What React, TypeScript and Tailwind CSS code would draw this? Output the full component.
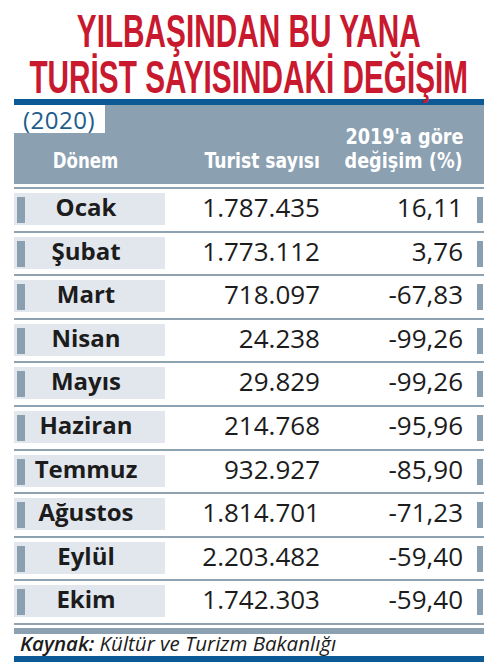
const rows = [
  { month: "Ocak", count: "1.787.435", change: "16,11" },
  { month: "Şubat", count: "1.773.112", change: "3,76" },
  { month: "Mart", count: "718.097", change: "-67,83" },
  { month: "Nisan", count: "24.238", change: "-99,26" },
  { month: "Mayıs", count: "29.829", change: "-99,26" },
  { month: "Haziran", count: "214.768", change: "-95,96" },
  { month: "Temmuz", count: "932.927", change: "-85,90" },
  { month: "Ağustos", count: "1.814.701", change: "-71,23" },
  { month: "Eylül", count: "2.203.482", change: "-59,40" },
  { month: "Ekim", count: "1.742.303", change: "-59,40" },
];

const cond = "font-['DejaVu_Sans',sans-serif] font-bold";

function Row({ month, count, change }: { month: string; count: string; change: string }) {
  return (
    <div className="h-[43.6px] border-t-2 border-[#8ea2b2] pt-[4px]">
      <div className="flex h-[32px] items-start text-[26px] leading-[24px] text-[#1c1c1c]">
        <div className="flex h-full w-[151px] items-start bg-[#e2e7ee]">
          <span className="ml-[3px] mt-[4px] h-[26px] w-[8px] bg-[#8aa0b1]" />
          <span className="flex-1 pr-[18px] pt-[2px] text-center text-[24px] font-bold">{month}</span>
        </div>
        <div className="w-[155px] pt-[2px] text-right">{count}</div>
        <div className="w-[143px] pt-[2px] text-right">{change}</div>
        <span className="ml-[14px] mt-[4px] h-[26px] w-[6px] bg-[#8aa0b1]" />
      </div>
    </div>
  );
}

export default function App() {
  return (
    <div className="h-[668px] w-[490px] bg-white font-['Open_Sans',sans-serif]">
      <div className="ml-[14px] w-[470px]">
        <div className="flex h-[99px] justify-center whitespace-nowrap pt-[8px] font-['Liberation_Sans',sans-serif] text-[46.5px] font-bold leading-[46px] text-[#c8192f]">
          <h1 className="inline-block origin-top scale-x-[0.64] text-center">
            YILBAŞINDAN BU YANA
            <br />
            TURİST SAYISINDAKİ DEĞİŞİM
          </h1>
        </div>
        <div className="h-[6px] bg-[#0b5a95]" />

        <div className={`flex h-[79px] bg-[#8ba0b1] text-[21px] leading-[24px] text-white ${cond}`}>
          <div className="flex w-[151px] flex-col justify-between pb-[11px]">
            <div className="h-[28px] w-[91px] bg-white pl-[9px] font-['Open_Sans',sans-serif] text-[24px] font-normal leading-[30px] tracking-[0.5px] text-[#1e5c8a]">
              (2020)
            </div>
            <div className="flex justify-center pr-[8px] whitespace-nowrap">
              <span className="inline-block origin-center scale-x-[0.79]">Dönem</span>
            </div>
          </div>
          <div className="flex w-[155px] items-end justify-end pb-[11px] whitespace-nowrap">
            <span className="inline-block origin-right scale-x-[0.82]">Turist sayısı</span>
          </div>
          <div className="flex w-[143px] flex-col items-end justify-end pb-[11px] whitespace-nowrap">
            <span className="inline-block origin-right scale-x-[0.84]">2019'a göre</span>
            <span className="inline-block origin-right scale-x-[0.84]">değişim (%)</span>
          </div>
        </div>

        <div className="mt-[3px]">
          {rows.map((r) => (
            <Row key={r.month} {...r} />
          ))}
        </div>
        <div className="h-[2px] bg-[#8ea2b2]" />
        <div className="mt-[3px] h-[6px] bg-[#8ba0b1]" />
        <div className="h-[18px] pl-[6px] text-[20.5px] italic leading-[18px] text-[#1c1c1c]">
          <span className="font-semibold">Kaynak:</span> Kültür ve Turizm Bakanlığı
        </div>
        <div className="mt-[4px] h-[6px] bg-[#0b5a95]" />
      </div>
    </div>
  );
}
